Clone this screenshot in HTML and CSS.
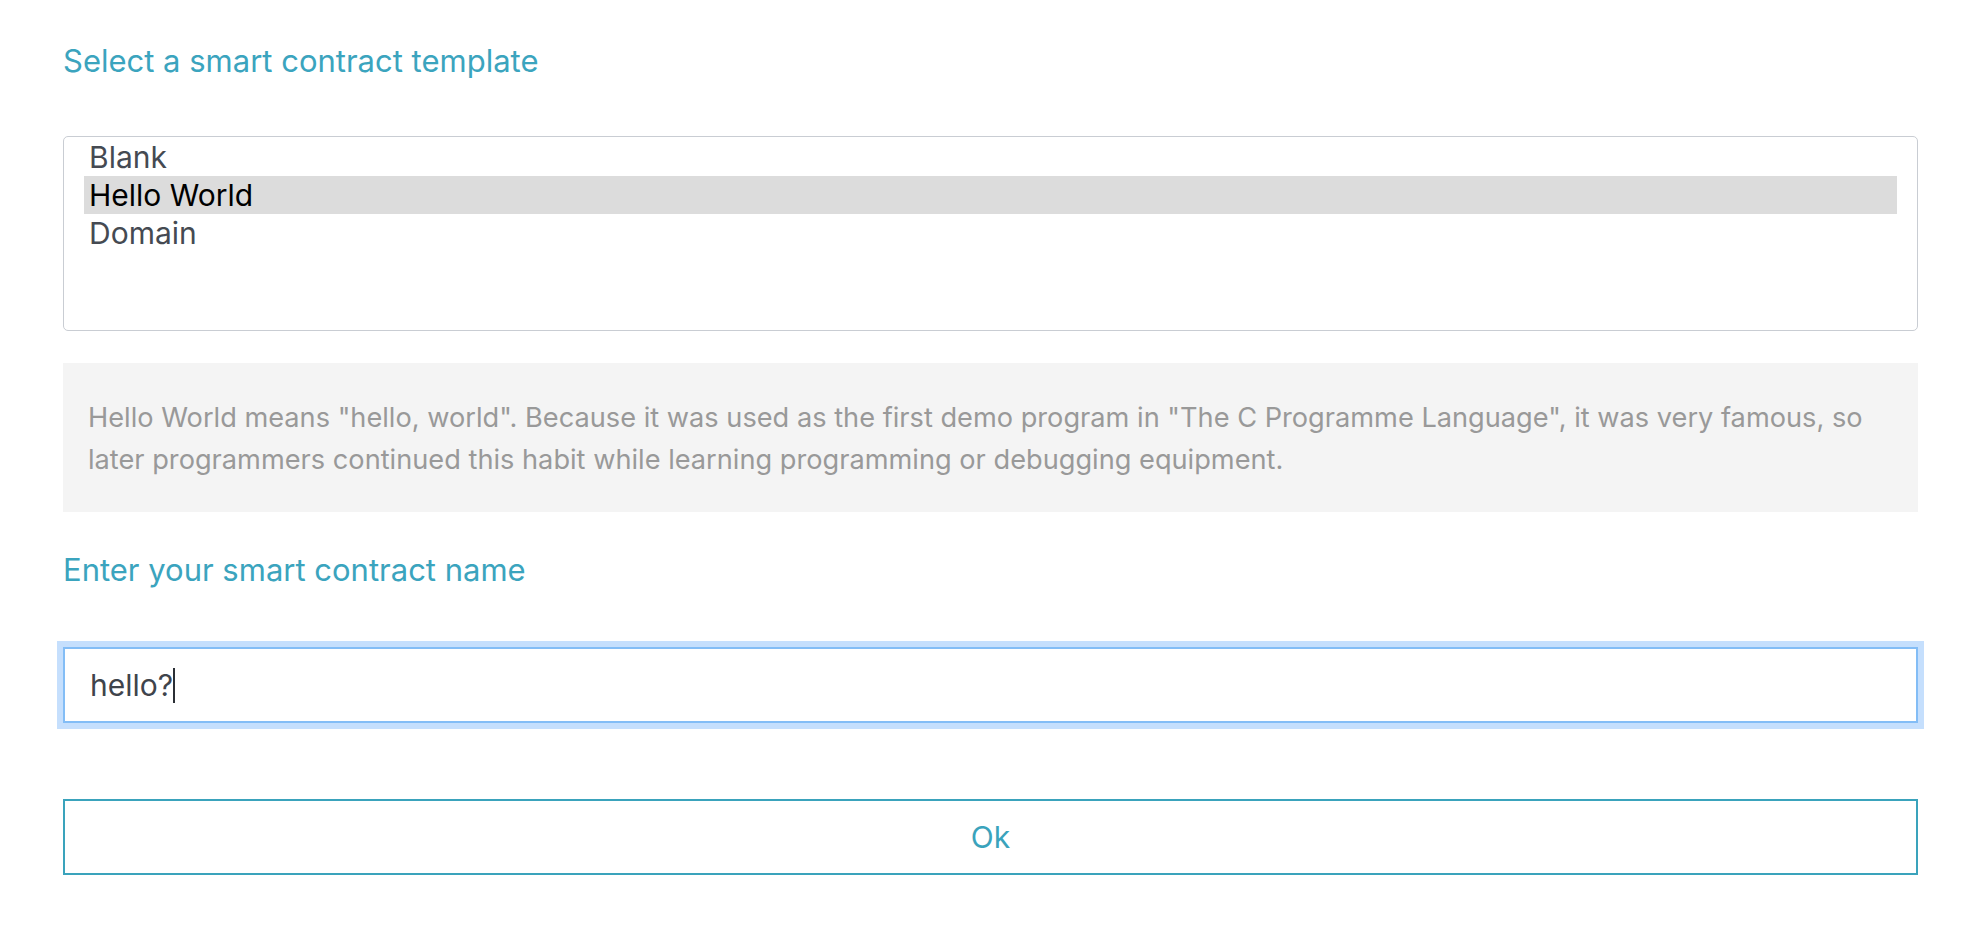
FILE: index.html
```html
<!DOCTYPE html>
<html lang="en">
<head>
<meta charset="utf-8">
<title>Select a smart contract template</title>
<link rel="stylesheet" href="styles.css">
</head>
<body>
<main class="page">
  <h2 class="label">Select a smart contract template</h2>
  <div class="listbox" role="listbox">
    <div class="option" role="option">Blank</div>
    <div class="option selected" role="option" aria-selected="true">Hello World</div>
    <div class="option" role="option">Domain</div>
  </div>
  <div class="description">Hello World means "hello, world". Because it was used as the first demo program in "The C Programme Language", it was very famous, so later programmers continued this habit while learning programming or debugging equipment.</div>
  <h2 class="label label-second">Enter your smart contract name</h2>
  <div class="input focused"><span class="input-text">hello?</span><span class="caret"></span></div>
  <button class="ok-button" type="button">Ok</button>
</main>
</body>
</html>
```

FILE: styles.css
```css
html, body {
  margin: 0;
  padding: 0;
  background: #ffffff;
}

body {
  font-family: Inter, "Noto Sans", "Liberation Sans", sans-serif;
}

.page {
  width: 1855px;
  margin-left: 63px;
  padding-top: 41px;
  display: flex;
  flex-direction: column;
}

.label {
  margin: 0;
  height: 40px;
  line-height: 40px;
  font-size: 31px;
  font-weight: 400;
  color: #3ba4be;
}

.label-second {
  margin-top: 38px;
}

.listbox {
  margin-top: 55px;
  height: 195px;
  box-sizing: border-box;
  border: 1px solid #c9cdd3;
  border-radius: 5px;
  padding: 1px 20px;
  display: flex;
  flex-direction: column;
}

.option {
  height: 38px;
  line-height: 38px;
  padding-left: 5px;
  font-size: 30px;
  color: #454a52;
}

.option.selected {
  background: #dcdcdc;
  color: #000000;
}

.description {
  margin-top: 32px;
  box-sizing: border-box;
  height: 149px;
  padding: 34px 45px 0 25px;
  background: #f4f4f4;
  color: #999999;
  font-size: 27.2px;
  line-height: 42px;
}

.input {
  margin-top: 57px;
  height: 76px;
  box-sizing: border-box;
  border: 2px solid #83bdf6;
  box-shadow: 0 0 0 6px #c5dffd;
  padding-left: 25px;
  display: flex;
  align-items: center;
  font-size: 30px;
  color: #3f444c;
}

.caret {
  display: inline-block;
  width: 2px;
  height: 35px;
  background: #2b2f35;
}

.ok-button {
  margin-top: 76px;
  height: 76px;
  box-sizing: border-box;
  border: 2px solid #3aa3bc;
  border-radius: 0;
  background: #ffffff;
  color: #3aa3bc;
  font-family: Inter, "Noto Sans", "Liberation Sans", sans-serif;
  font-size: 30px;
  padding: 0;
}
```
